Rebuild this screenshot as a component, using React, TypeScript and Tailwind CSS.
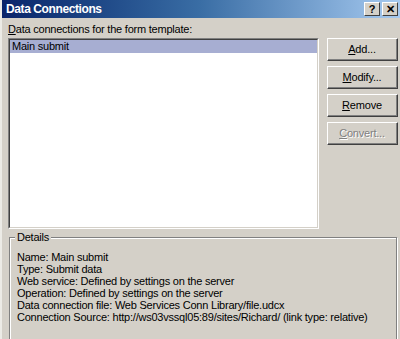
const font = { fontFamily: '"Liberation Sans", Tahoma, Arial, sans-serif' };

function XpButton({
  label,
  ul,
  disabled = false,
}: {
  label: string;
  ul: number;
  disabled?: boolean;
}) {
  const before = label.slice(0, ul);
  const ch = label.slice(ul, ul + 1);
  const after = label.slice(ul + 1);
  return (
    <div className="h-[23px] w-[71px] border border-t-white border-l-white border-r-[#404040] border-b-[#404040] bg-[#d4d0c8]">
      <div className="flex h-full w-full items-center justify-center border-r border-b border-r-[#808080] border-b-[#808080] text-[11px] tracking-[-0.2px]">
        <span
          className={
            disabled
              ? 'text-[#808080] [text-shadow:1px_1px_0_#ffffff]'
              : 'text-black'
          }
        >
          {before}
          <span className="underline">{ch}</span>
          {after}
        </span>
      </div>
    </div>
  );
}

function CaptionButton({ glyph }: { glyph: string }) {
  return (
    <div className="flex h-[14px] w-[16px] items-center justify-center border border-t-white border-l-white border-r-[#404040] border-b-[#404040] bg-[#d4d0c8] text-[11px] font-bold leading-none text-black">
      {glyph}
    </div>
  );
}

const details = [
  'Name: Main submit',
  'Type: Submit data',
  'Web service: Defined by settings on the server',
  'Operation: Defined by settings on the server',
  'Data connection file: Web Services Conn Library/file.udcx',
  'Connection Source: http://ws03vssql05:89/sites/Richard/ (link type: relative)',
];

export default function App() {
  return (
    <div
      className="h-[339px] w-[400px] overflow-hidden border-l-2 border-l-[#ecebe6] bg-[#d4d0c8] text-black"
      style={font}
    >
      {/* Title bar */}
      <div className="flex h-[18px] items-center justify-between bg-gradient-to-r from-[#0a246a] via-[#3a6ea5] to-[#a6caf0] pl-[4px] pr-[2px]">
        <span className="text-[12px] font-bold tracking-[-0.4px] text-white">Data Connections</span>
        <div className="flex gap-[2px]">
          <CaptionButton glyph="?" />
          <CaptionButton glyph="✕" />
        </div>
      </div>

      {/* Body */}
      <div className="flex gap-[8px] pl-[6px] pt-[5px]">
        <div className="flex flex-col">
          <div className="h-[15px] text-[11px] leading-[13px] tracking-[-0.22px]">
            <span className="underline">D</span>ata connections for the form template:
          </div>
          <div className="h-[191px] w-[311px] border border-t-[#808080] border-l-[#808080] border-r-white border-b-white">
            <div className="h-full w-full border border-t-[#404040] border-l-[#404040] border-r-[#d4d0c8] border-b-[#d4d0c8] bg-white">
              <div className="h-[13px] bg-[#a7aed2] pl-[2px] text-[11px] leading-[13px] tracking-[-0.22px]">
                Main submit
              </div>
            </div>
          </div>
        </div>
        <div className="flex flex-col gap-[5px] pt-[15px]">
          <XpButton label="Add..." ul={0} />
          <XpButton label="Modify..." ul={0} />
          <XpButton label="Remove" ul={0} />
          <XpButton label="Convert..." ul={0} disabled />
        </div>
      </div>

      {/* Details group */}
      <div className="relative ml-[7px] mr-[3px] mt-[8px] h-[120px] border border-[#808080] shadow-[inset_1px_1px_0_#ffffff,1px_1px_0_#ffffff]">
        <span className="absolute -top-[7px] left-[5px] bg-[#d4d0c8] px-[2px] text-[11px] leading-[13px] tracking-[-0.22px]">
          Details
        </span>
        <div className="flex flex-col pl-[7px] pt-[13px] text-[11px] leading-[12px] tracking-[-0.22px]">
          {details.map((d) => (
            <div key={d}>{d}</div>
          ))}
        </div>
      </div>
    </div>
  );
}
